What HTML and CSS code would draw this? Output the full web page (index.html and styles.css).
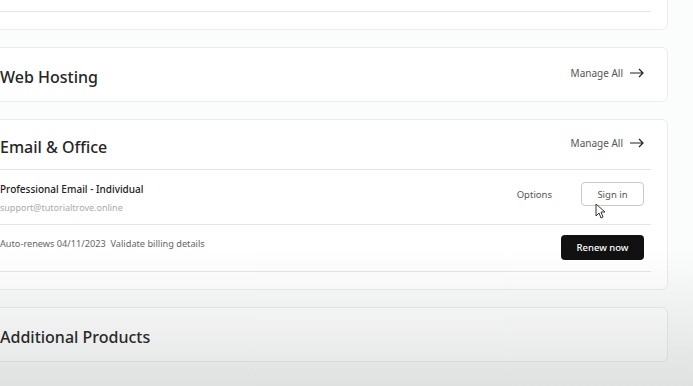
FILE: index.html
```html
<!DOCTYPE html>
<html lang="en">
<head>
    <meta charset="UTF-8">
    <meta name="viewport" content="width=device-width, initial-scale=1.0">
    <title>My Products</title>
    <link rel="stylesheet" href="styles.css">
</head>
<body>
    <div class="products">
        <div class="card card-top">
            <div class="top-row"></div>
        </div>

        <div class="card">
            <div class="card-header single">
                <h2>Web Hosting</h2>
                <a href="#" class="manage">Manage All
                    <svg width="14" height="10" viewBox="0 0 14 10"><path d="M0 5h13M9 1l4 4-4 4" fill="none" stroke="#222" stroke-width="1.2"/></svg>
                </a>
            </div>
        </div>

        <div class="card">
            <div class="card-header">
                <h2>Email &amp; Office</h2>
                <a href="#" class="manage">Manage All
                    <svg width="14" height="10" viewBox="0 0 14 10"><path d="M0 5h13M9 1l4 4-4 4" fill="none" stroke="#222" stroke-width="1.2"/></svg>
                </a>
            </div>
            <div class="product-row">
                <div class="product-info">
                    <div class="product-name">Professional Email - Individual</div>
                    <div class="product-mail">support@tutorialtrove.online</div>
                </div>
                <div class="actions">
                    <a href="#" class="options">Options</a>
                    <button class="btn-outline">Sign in</button>
                    <svg class="cursor" width="11" height="16" viewBox="0 0 11 16"><path d="M1 1v12l3-3 2 5 2-1-2-5h4z" fill="#fff" stroke="#333" stroke-width="1"/></svg>
                </div>
            </div>
            <div class="renew-row">
                <div class="renew-text">Auto-renews 04/11/2023&nbsp;&nbsp;Validate billing details</div>
                <button class="btn-dark">Renew now</button>
            </div>
        </div>

        <div class="card">
            <div class="card-header single">
                <h2>Additional Products</h2>
            </div>
        </div>
    </div>
    <div class="shade"></div>
</body>
</html>
```

FILE: styles.css
```css
body {
    margin: 0;
    height: 386px;
    overflow: hidden;
    background: #fbfcfc;
    font-family: "Noto Sans", Arial, sans-serif;
    color: #222;
}

/* darkening at the bottom of the capture */
.shade {
    position: fixed;
    left: 0;
    right: 0;
    top: 0;
    height: 386px;
    pointer-events: none;
    background: linear-gradient(rgba(0, 0, 0, 0) 0, rgba(0, 0, 0, 0) 250px, rgba(70, 78, 76, 0.15) 386px);
}

.products {
    display: flex;
    flex-direction: column;
    gap: 17px;
    margin-left: -16px;
    width: 684px;
}

.card {
    background: #fff;
    border: 1px solid #ececec;
    border-radius: 6px;
    padding: 0 16px 0 15px;
}

.card-top {
    margin-top: -30px;
    padding-bottom: 17px;
}

.top-row {
    height: 40px;
    border-bottom: 1px solid #e6e6e6;
}

.card-header {
    display: flex;
    justify-content: space-between;
    align-items: center;
    height: 49px;
    padding-right: 7px;
    border-bottom: 1px solid #e3e3e3;
}

.card-header.single {
    height: 53px;
    border-bottom: none;
}

h2 {
    margin: 4px 0 0;
    font-size: 16px;
    font-weight: 500;
    color: #262626;
}

.card-header.single h2 {
    margin-top: 4px;
}

.manage {
    display: flex;
    align-items: center;
    gap: 7px;
    font-size: 10px;
    color: #555;
    text-decoration: none;
    margin-bottom: 4px;
}

.product-row {
    display: flex;
    justify-content: space-between;
    align-items: center;
    height: 54px;
    padding-right: 7px;
    border-bottom: 1px solid #e6e6e6;
}

.product-name {
    font-size: 10px;
    font-weight: 500;
    color: #222;
    margin-top: 2px;
}

.product-mail {
    font-size: 9px;
    color: #aaa;
    margin-top: 5px;
}

.actions {
    position: relative;
    display: flex;
    align-items: center;
    gap: 29px;
    margin-bottom: 6px;
}

.options {
    font-size: 9.5px;
    color: #555;
    text-decoration: none;
}

.btn-outline {
    width: 63px;
    height: 24px;
    border: 1px solid #c9c9c9;
    border-radius: 4px;
    background: #fff;
    font-family: inherit;
    font-size: 9.5px;
    color: #555;
}

.cursor {
    position: absolute;
    left: 78px;
    top: 21px;
}

.renew-row {
    display: flex;
    justify-content: space-between;
    align-items: flex-start;
    height: 46px;
    padding-right: 7px;
    border-bottom: 1px solid #e6e6e6;
    margin-bottom: 17px;
}

.renew-text {
    font-size: 9.2px;
    color: #666;
    margin-top: 12px;
}

.btn-dark {
    margin-top: 10px;
    width: 83px;
    height: 25px;
    border: none;
    border-radius: 4px;
    background: #111;
    color: #fff;
    font-family: inherit;
    font-size: 9.5px;
    font-weight: 500;
}
```
